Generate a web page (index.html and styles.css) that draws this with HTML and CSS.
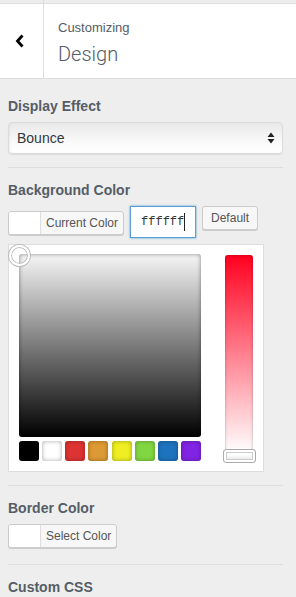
FILE: index.html
```html
<!DOCTYPE html>
<html lang="en">
<head>
  <meta charset="UTF-8">
  <title>Customizing Design</title>
  <link rel="stylesheet" href="styles.css">
</head>
<body>
  <div class="header">
    <div class="back">
      <svg width="10" height="14" viewBox="0 0 10 14"><path d="M7.5 1.5 L2.5 7 L7.5 12.5" fill="none" stroke="#000" stroke-width="2.8"/></svg>
    </div>
    <div class="title">
      <div class="title-small">Customizing</div>
      <div class="title-big">Design</div>
    </div>
  </div>

  <div class="panel">
    <div class="section first">
      <div class="heading">Display Effect</div>
      <div class="select">
        <span>Bounce</span>
        <svg width="8" height="12" viewBox="0 0 8 12"><path d="M4 0.5 L7.5 5 L0.5 5 Z M4 11.5 L7.5 7 L0.5 7 Z" fill="#222"/></svg>
      </div>
    </div>

    <div class="section">
      <div class="heading">Background Color</div>
      <div class="color-row">
        <div class="color-btn shifted">
          <span class="swatch"></span>
          <span class="color-label">Current Color</span>
        </div>
        <div class="hex-input"><span>ffffff</span><span class="caret"></span></div>
        <div class="default-btn">Default</div>
      </div>
      <div class="picker">
        <div class="picker-left">
          <div class="square">
            <div class="square-handle"></div>
          </div>
          <div class="palette">
            <span class="pal" style="background:#000000"></span>
            <span class="pal" style="background:#ffffff"></span>
            <span class="pal" style="background:#dd3333"></span>
            <span class="pal" style="background:#dd9933"></span>
            <span class="pal" style="background:#eeee22"></span>
            <span class="pal" style="background:#81d742"></span>
            <span class="pal" style="background:#1e73be"></span>
            <span class="pal" style="background:#8224e3"></span>
          </div>
        </div>
        <div class="strip">
          <div class="strip-handle"></div>
        </div>
      </div>
    </div>

    <div class="section border-section">
      <div class="heading">Border Color</div>
      <div class="color-row">
        <div class="color-btn">
          <span class="swatch"></span>
          <span class="color-label">Select Color</span>
        </div>
      </div>
    </div>

    <div class="section last">
      <div class="heading">Custom CSS</div>
    </div>
  </div>
</body>
</html>
```

FILE: styles.css
```css
* { box-sizing: border-box; }
body {
  margin: 0;
  background: #eeeeee;
  font-family: 'Liberation Sans', Arial, sans-serif;
  color: #32373c;
  overflow: hidden;
}

.header {
  display: flex;
  height: 79px;
  border-bottom: 1px solid #dddddd;
}
.back, .title {
  background: linear-gradient(#eeeeee 3px, #dddddd 3px, #dddddd 4px, #ffffff 4px);
}
.back {
  width: 44px;
  border-right: 1px solid #dddddd;
  display: flex;
  align-items: center;
  justify-content: center;
  padding: 4px 4px 0 0;
}
.back svg { display: block; }
.title {
  flex: 1;
  padding: 19px 0 0 14px;
  color: #555d66;
}
.title-small {
  font-size: 13px;
  line-height: 18px;
}
.title-big {
  font-family: Roboto, 'Liberation Sans', sans-serif;
  font-size: 20px;
  line-height: 26px;
  margin-top: 4px;
  font-weight: 300;
}

.panel { padding: 0 13px 0 8px; }
.section {
  padding: 12px 0 13px;
  border-bottom: 1px solid #dddddd;
}
.section.first { padding-top: 17px; }
.section.border-section { padding-bottom: 16px; }
.section.last { border-bottom: none; }
.heading {
  font-size: 14px;
  font-weight: bold;
  line-height: 20px;
  color: #555d66;
  margin-bottom: 6px;
}

.select {
  height: 32px;
  border: 1px solid #dcdcdc;
  border-radius: 4px;
  background: linear-gradient(#e9e9e9, #fbfbfb 70%, #ffffff);
  box-shadow: 0 1px 1px rgba(0,0,0,0.08), inset 1px 0 2px rgba(0,0,0,0.06);
  display: flex;
  align-items: center;
  justify-content: space-between;
  padding: 0 7px 0 8px;
  font-size: 14px;
  color: #32373c;
}
.select svg { display: block; }

.color-row {
  display: flex;
  align-items: flex-start;
  gap: 6px;
}
.color-btn {
  display: flex;
  height: 24px;
  border: 1px solid #cccccc;
  border-radius: 3px;
  box-shadow: 0 1px 0 #cccccc;
  overflow: hidden;
  background: #f7f7f7;
}
.color-btn.shifted { margin-top: 5px; }
.swatch {
  width: 32px;
  background: #ffffff;
  border-right: 1px solid #dddddd;
}
.color-label {
  font-size: 12px;
  line-height: 22px;
  padding: 0 5px 0 5px;
  color: #555555;
}
.hex-input {
  width: 66px;
  height: 32px;
  border: 1px solid #5b9dd9;
  box-shadow: 0 0 2px rgba(30,140,190,0.8);
  background: #ffffff;
  display: flex;
  align-items: center;
  padding-left: 10px;
  font-family: 'Liberation Mono', 'Courier New', monospace;
  font-size: 12px;
  color: #32373c;
}
.caret {
  width: 1px;
  height: 18px;
  background: #222222;
}
.default-btn {
  height: 24px;
  padding: 0 8px;
  border: 1px solid #cccccc;
  border-radius: 3px;
  background: #f7f7f7;
  box-shadow: 0 1px 0 #cccccc;
  font-size: 12px;
  line-height: 22px;
  color: #555555;
}

.picker {
  margin-top: 6px;
  width: 256px;
  border: 1px solid #dddddd;
  background: #ffffff;
  padding: 9px 10px 10px 10px;
  display: flex;
  justify-content: space-between;
}
.square {
  position: relative;
  width: 182px;
  height: 183px;
  border-radius: 3px;
  background: linear-gradient(#f6f6f6, #000000);
  box-shadow: inset 0 0 4px rgba(0,0,0,0.45);
}
.square-handle {
  position: absolute;
  left: -10px;
  top: -9px;
  width: 21px;
  height: 21px;
  border-radius: 50%;
  border: 2px solid #ffffff;
  box-shadow: 0 0 0 1px #bbbbbb, inset 0 0 0 1px #bbbbbb;
}
.palette {
  display: flex;
  justify-content: space-between;
  margin-top: 4px;
}
.pal {
  width: 20px;
  height: 20px;
  border-radius: 3px;
  box-shadow: inset 0 0 4px rgba(0,0,0,0.35);
}
.strip {
  position: relative;
  margin-top: 1px;
  width: 28px;
  height: 198px;
  border-radius: 3px;
  background: linear-gradient(#ff001e, #ffffff);
  box-shadow: inset 0 0 3px rgba(0,0,0,0.3);
}
.strip-handle {
  position: absolute;
  left: -2px;
  top: 194px;
  width: 33px;
  height: 14px;
  border-radius: 3px;
  border: 1px solid #aaaaaa;
  background: #ffffff;
  box-shadow: inset 0 0 0 2px #ffffff, inset 0 0 0 3px #cccccc, inset 0 -4px 4px #e0e0e0;
}
```
